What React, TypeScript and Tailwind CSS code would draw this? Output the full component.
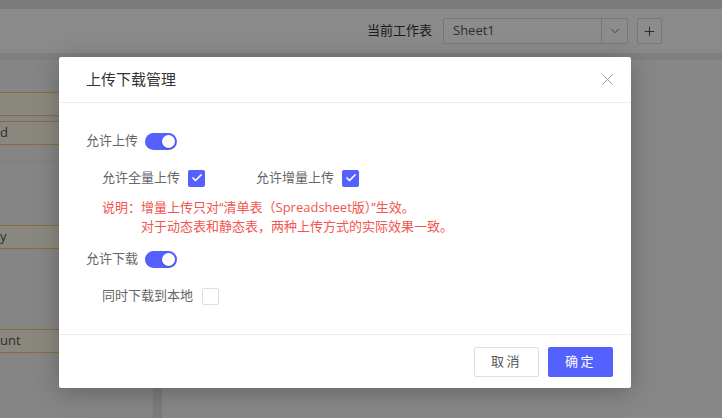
import { Check, ChevronDown, Plus, X } from 'lucide-react'

const font = { fontFamily: '"Open Sans", "Noto Sans CJK SC", sans-serif' }

function Toggle() {
  return (
    <div className="w-[32px] h-[17px] rounded-full bg-[#5561ff] flex items-center justify-end px-[2px]">
      <div className="w-[13px] h-[13px] rounded-full bg-white shadow-[0_1px_2px_rgba(0,0,0,0.25)]" />
    </div>
  )
}

function Box({ checked }: { checked?: boolean }) {
  return checked ? (
    <div className="w-[17px] h-[17px] rounded-[2px] bg-[#5561ff] flex items-center justify-center">
      <Check size={12} strokeWidth={3.5} className="text-white" />
    </div>
  ) : (
    <div className="w-[17px] h-[17px] rounded-[2px] border border-[#dcdfe6] bg-white" />
  )
}

function Item({ text }: { text: string }) {
  return (
    <div className="h-[24px] border-y border-[#f5c56a] bg-[#fbf7e6] flex items-center text-[13px] text-[#555]">
      {text}
    </div>
  )
}

export default function App() {
  return (
    <div className="w-[722px] h-[418px] relative overflow-hidden bg-[#f5f5f5]" style={font}>
      {/* 背景ページ */}
      <div className="flex flex-col h-full">
        <div className="h-[9px] bg-[#e1e1e1]" />
        <div className="h-[44px] bg-[#fbfbfb] flex items-center justify-end pr-[60px] gap-[9px]">
          <span className="text-[13px] text-[#333]">当前工作表</span>
          <div className="flex h-[26px] border border-[#d9d9d9] rounded-[2px] bg-white ml-[2px]">
            <div className="w-[157px] flex items-center pl-[9px] text-[13px] text-[#555]">Sheet1</div>
            <div className="w-[26px] border-l border-[#d9d9d9] flex items-center justify-center text-[#666]">
              <ChevronDown size={14} strokeWidth={1.5} />
            </div>
          </div>
          <div className="w-[25px] h-[26px] border border-[#d9d9d9] rounded-[2px] bg-white flex items-center justify-center text-[#444]">
            <Plus size={15} strokeWidth={1.5} />
          </div>
        </div>
        <div className="h-[7px] bg-[#e8e8e8]" />
        <div className="flex flex-1">
          <div className="w-[153px] flex flex-col pt-[32px] bg-[#f2f2f2]">
            <Item text="" />
            <div className="h-[5px]" />
            <Item text="d" />
            <div className="h-[17px] border-b border-[#e6e6e6]" />
            <div className="h-[63px]" />
            <Item text="y" />
            <div className="h-[80px]" />
            <Item text="unt" />
          </div>
          <div className="w-[9px] bg-[#e0e0e0]" />
          <div className="flex-1 bg-[#f6f6f6]" />
        </div>
      </div>

      {/* オーバーレイ */}
      <div className="absolute inset-0 bg-black/45 pt-[57px] pl-[59px]">
        <div className="w-[572px] h-[331px] bg-white rounded-[2px] shadow-[0_4px_24px_rgba(0,0,0,0.25)] flex flex-col">
          <div className="h-[46px] border-b border-[#eeeeee] flex items-center justify-between pl-[27px] pr-[14px]">
            <span className="text-[15px] text-[#333]">上传下载管理</span>
            <X size={19} strokeWidth={1.2} className="text-[#999]" />
          </div>

          <div className="flex-1 px-[27px] pt-[28px] text-[13px] text-[#666]">
            <div className="h-[20px] flex items-center gap-[7px]">
              <span>允许上传</span>
              <Toggle />
            </div>
            <div className="mt-[18px] pl-[16px] h-[18px] flex items-center">
              <div className="w-[154px] flex items-center gap-[8px]">
                <span>允许全量上传</span>
                <Box checked />
              </div>
              <div className="flex items-center gap-[8px]">
                <span>允许增量上传</span>
                <Box checked />
              </div>
            </div>
            <div className="mt-[11px] pl-[16px] text-[#f2554f] leading-[19px] flex">
              <span className="w-[39px] shrink-0">说明：</span>
              <div>
                <div>增量上传只对“清单表（Spreadsheet版）”生效。</div>
                <div>对于动态表和静态表，两种上传方式的实际效果一致。</div>
              </div>
            </div>
            <div className="mt-[13px] h-[20px] flex items-center gap-[7px]">
              <span>允许下载</span>
              <Toggle />
            </div>
            <div className="mt-[18px] pl-[16px] h-[18px] flex items-center gap-[9px]">
              <span>同时下载到本地</span>
              <Box />
            </div>
          </div>

          <div className="h-[54px] border-t border-[#eeeeee] flex justify-end items-start pt-[12px] pr-[18px] gap-[9px]">
            <button className="w-[65px] h-[30px] border border-[#dcdfe6] rounded-[2px] text-[13px] text-[#555] tracking-[0.2em] bg-white">
              取消
            </button>
            <button className="w-[65px] h-[30px] rounded-[2px] text-[13px] text-white tracking-[0.2em] bg-[#5561ff]">
              确定
            </button>
          </div>
        </div>
      </div>
    </div>
  )
}
